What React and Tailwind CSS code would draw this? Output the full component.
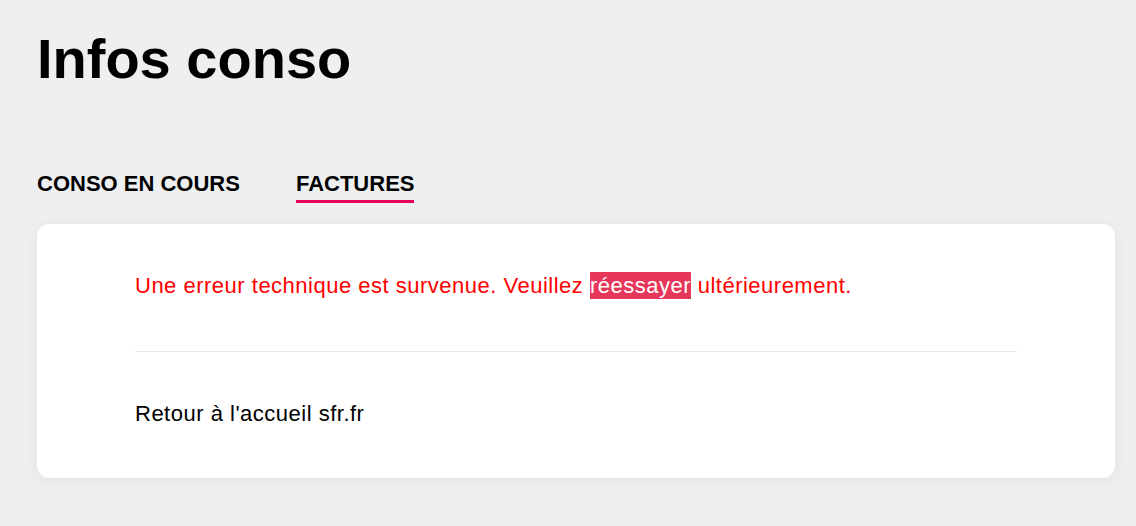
export default function App() {
    const tabs = [
        { id: 'conso', label: 'CONSO EN COURS', active: false },
        { id: 'factures', label: 'FACTURES', active: true },
    ]

    return (
        <div className="min-h-screen bg-[#eeeff1] px-[37px] pt-[31px] pb-10 text-black" style={{ fontFamily: '"Liberation Sans", Arial, sans-serif' }}>
            <h1 className="text-[56px] leading-none font-bold">Infos conso</h1>

            {/* Tabs */}
            <div className="flex gap-[56px] mt-[86px]">
                {tabs.map(tab => (
                    <div
                        key={tab.id}
                        className={`text-[22px] leading-none font-bold pb-[5px] border-b-[3px] ${tab.active ? 'border-[#e4005a]' : 'border-transparent'}`}
                    >
                        {tab.label}
                    </div>
                ))}
            </div>

            <div className="mt-[21px] w-[1078px] bg-white rounded-[12px] shadow-[0_2px_14px_rgba(0,0,0,0.06)] px-[98px] pt-[49px] pb-[51px]">
                <p className="text-[22px] leading-[26px] text-[#ff0000] tracking-[0.5px]">
                    Une erreur technique est survenue. Veuillez{' '}
                    <span className="bg-[#e6375a] text-white py-[1px]">réessayer</span>{' '}
                    ultérieurement.
                </p>

                <div className="mt-[52px] border-t border-[#e8e8e8]"></div>

                <a href="#" className="block mt-[49px] text-[22px] leading-[26px] tracking-[0.5px]">
                    Retour à l'accueil sfr.fr
                </a>
            </div>
        </div>
    )
}
